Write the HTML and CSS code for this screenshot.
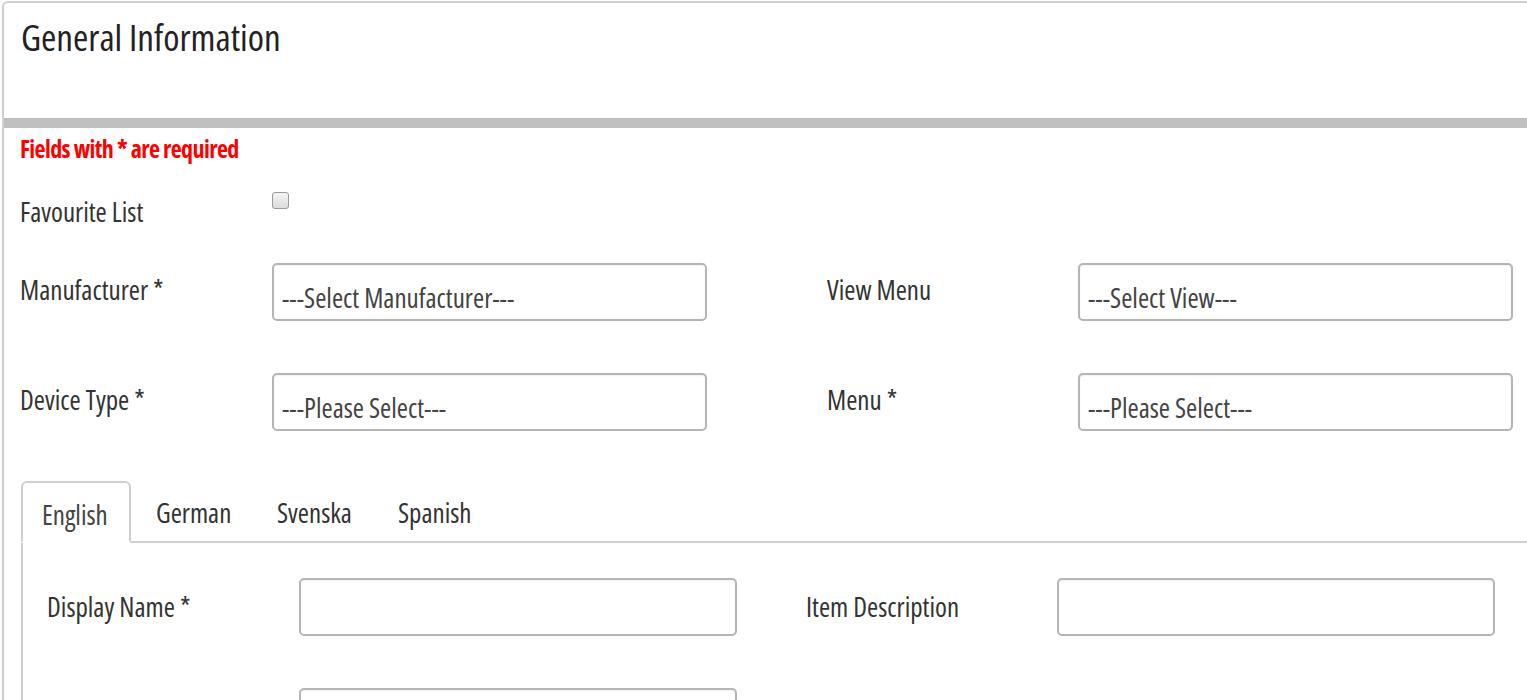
FILE: index.html
```html
<!DOCTYPE html>
<html>
<head>
<meta charset="utf-8">
<link rel="stylesheet" href="styles.css">
</head>
<body>
<div class="card">
  <div class="card-head">
    <h2 class="title">General Information</h2>
  </div>
  <div class="bar"></div>
  <div class="card-body">
    <div class="required">Fields with * are required</div>
    <div class="fav-row">
      <label class="lbl">Favourite List</label>
      <span class="checkbox"></span>
    </div>
    <div class="form-grid">
      <label class="lbl">Manufacturer *</label>
      <div class="select">---Select Manufacturer---</div>
      <span></span>
      <label class="lbl">View Menu</label>
      <div class="select">---Select View---</div>

      <label class="lbl">Device Type *</label>
      <div class="select">---Please Select---</div>
      <span></span>
      <label class="lbl">Menu *</label>
      <div class="select">---Please Select---</div>
    </div>

    <div class="tabs">
      <div class="tab active">English</div>
      <div class="tab">German</div>
      <div class="tab">Svenska</div>
      <div class="tab">Spanish</div>
      <div class="tab-fill"></div>
    </div>
    <div class="tab-panel">
      <div class="panel-grid">
        <label class="lbl">Display Name *</label>
        <div class="input"></div>
        <span></span>
        <label class="lbl">Item Description</label>
        <div class="input"></div>

        <label class="lbl"></label>
        <div class="input"></div>
        <span></span>
        <span></span>
        <span></span>
      </div>
    </div>
  </div>
</div>
</body>
</html>
```

FILE: styles.css
```css
html, body {
  margin: 0;
  padding: 0;
  background: #fff;
  overflow: hidden;
}
body {
  font-family: "Open Sans", "Liberation Sans", sans-serif;
  font-stretch: 75%;
  color: #333;
  width: 1527px;
  height: 700px;
}
.card {
  margin: 1px -20px 0 2px;
  border: 2px solid #cfcfcf;
  border-right: none;
  border-bottom: none;
  border-top-left-radius: 6px;
  height: 760px;
}
.card-head {
  height: 115px;
  padding-left: 17px;
}
.title {
  margin: 0;
  padding-top: 9px;
  font-size: 37px;
  font-weight: 400;
  line-height: 50px;
  color: #222;
}
.bar {
  height: 9px;
  background: #c0c0c0;
  border-top: 1px solid #b8b8b8;
}
.card-body {
  padding-left: 16px;
}
.required {
  color: #ff0000;
  font-weight: 700;
  font-size: 24px;
  letter-spacing: -0.6px;
  line-height: 30px;
  margin-top: 6px;
}
.lbl {
  font-size: 27px;
  line-height: 34px;
  color: #333;
}
.fav-row {
  display: grid;
  grid-template-columns: 252px 20px;
  margin-top: 33px;
  height: 32px;
}
.fav-row .lbl {
  margin-top: -2px;
}
.checkbox {
  width: 15px;
  height: 15px;
  border: 1px solid #9a9a9a;
  border-radius: 3px;
  background: linear-gradient(#f4f4f4, #dcdcdc);
  margin-top: -5px;
}
.form-grid {
  display: grid;
  grid-template-columns: 252px 435px 120px 251px 435px;
  grid-auto-rows: 58px;
  row-gap: 52px;
  margin-top: 34px;
}
.form-grid .lbl {
  padding-top: 10px;
}
.select, .input {
  box-sizing: border-box;
  border: 2px solid #b5b5b5;
  border-radius: 5px;
  background: #fff;
  box-shadow: inset 0 1px 2px rgba(0,0,0,0.06);
}
.select {
  font-size: 27px;
  line-height: 34px;
  padding: 16px 0 0 8px;
  color: #444;
  white-space: nowrap;
  overflow: hidden;
}
.tabs {
  display: flex;
  margin-top: 50px;
  height: 62px;
  margin-left: 1px;
}
.tab {
  font-size: 27px;
  line-height: 34px;
  padding: 15px 0 0;
  box-sizing: border-box;
  height: 62px;
  border-bottom: 2px solid #d0d0d0;
  color: #333;
}
.tab.active {
  border: 2px solid #d0d0d0;
  border-bottom-color: transparent;
  border-radius: 6px 6px 0 0;
  width: 110px;
  padding-left: 19px;
  color: #444;
}
.tab:nth-child(2) { padding-left: 25px; width: 120px; }
.tab:nth-child(3) { padding-left: 26px; width: 121px; }
.tab:nth-child(4) { padding-left: 26px; width: 90px; }
.tab-fill {
  flex: 1;
  border-bottom: 2px solid #d0d0d0;
}
.tab-panel {
  margin-left: 1px;
  border-left: 2px solid #d0d0d0;
  height: 300px;
  padding-left: 24px;
}
.panel-grid {
  display: grid;
  grid-template-columns: 252px 438px 69px 251px 438px;
  grid-auto-rows: 58px;
  row-gap: 52px;
  padding-top: 35px;
}
.panel-grid .lbl {
  padding-top: 12px;
}
```
